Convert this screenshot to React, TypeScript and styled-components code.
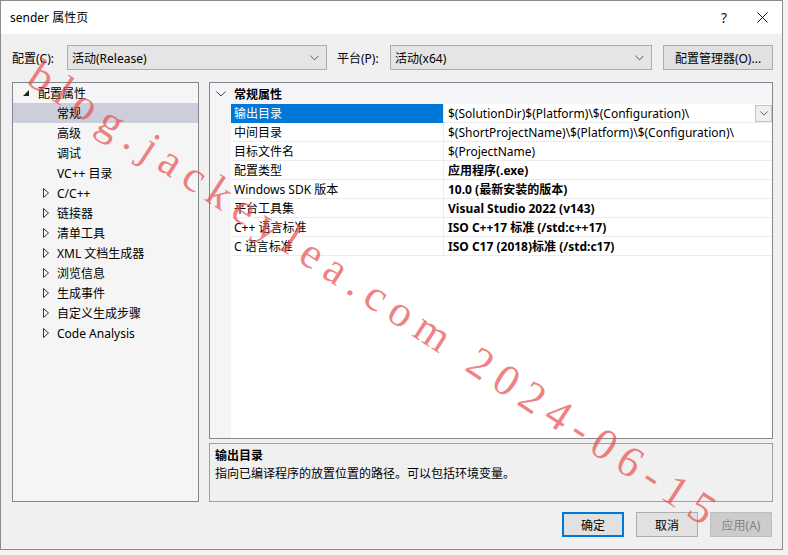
import styled, { createGlobalStyle } from "styled-components"

const GlobalStyle = createGlobalStyle`
    html, body {
        margin: 0;
        padding: 0;
        background: #f3f3f3;
    }
    body {
        font-family: "Noto Sans", "Noto Sans CJK SC", sans-serif;
        font-size: 12px;
        color: #000;
    }
`

type TreeItem = { label: string; level: number; expander?: "open" | "closed"; selected?: boolean }

const treeItems: TreeItem[] = [
    { label: "配置属性", level: 0, expander: "open" },
    { label: "常规", level: 1, selected: true },
    { label: "高级", level: 1 },
    { label: "调试", level: 1 },
    { label: "VC++ 目录", level: 1 },
    { label: "C/C++", level: 1, expander: "closed" },
    { label: "链接器", level: 1, expander: "closed" },
    { label: "清单工具", level: 1, expander: "closed" },
    { label: "XML 文档生成器", level: 1, expander: "closed" },
    { label: "浏览信息", level: 1, expander: "closed" },
    { label: "生成事件", level: 1, expander: "closed" },
    { label: "自定义生成步骤", level: 1, expander: "closed" },
    { label: "Code Analysis", level: 1, expander: "closed" },
]

type Prop = { name: string; value: string; bold?: boolean }

const props: Prop[] = [
    { name: "输出目录", value: "$(SolutionDir)$(Platform)\\$(Configuration)\\" },
    { name: "中间目录", value: "$(ShortProjectName)\\$(Platform)\\$(Configuration)\\" },
    { name: "目标文件名", value: "$(ProjectName)" },
    { name: "配置类型", value: "应用程序(.exe)", bold: true },
    { name: "Windows SDK 版本", value: "10.0 (最新安装的版本)", bold: true },
    { name: "平台工具集", value: "Visual Studio 2022 (v143)", bold: true },
    { name: "C++ 语言标准", value: "ISO C++17 标准 (/std:c++17)", bold: true },
    { name: "C 语言标准", value: "ISO C17 (2018)标准 (/std:c17)", bold: true },
]

const Chevron = ({ size = 9 }: { size?: number }) => (
    <svg width={size} height={Math.round(size / 2) + 1} viewBox="0 0 10 6">
        <polyline points="0.5,0.5 5,5 9.5,0.5" fill="none" stroke="#444" strokeWidth="1" />
    </svg>
)

const Expander = ({ kind }: { kind: "open" | "closed" }) =>
    kind === "open" ? (
        <svg width="8" height="8" viewBox="0 0 8 8">
            <polygon points="7,1 7,7 1,7" fill="#222" />
        </svg>
    ) : (
        <svg width="6" height="10" viewBox="0 0 6 10">
            <polygon points="0.5,0.5 5.5,5 0.5,9.5" fill="none" stroke="#333" strokeWidth="1" />
        </svg>
    )

export default function App() {
    return (
        <>
            <GlobalStyle />
            <Window>
                <TitleBar>
                    <Title>sender 属性页</Title>
                    <TitleButtons>
                        <Help>?</Help>
                        <svg width="11" height="11" viewBox="0 0 11 11">
                            <path d="M0.5,0.5 L10.5,10.5 M10.5,0.5 L0.5,10.5" stroke="#111" strokeWidth="1" />
                        </svg>
                    </TitleButtons>
                </TitleBar>
                <Body>
                    <ConfigRow>
                        <FieldLabel>配置(C):</FieldLabel>
                        <Select width={260}>
                            <span>活动(Release)</span>
                            <Chevron />
                        </Select>
                        <FieldLabel>平台(P):</FieldLabel>
                        <Select width={262}>
                            <span>活动(x64)</span>
                            <Chevron />
                        </Select>
                        <Button width={110} grow>配置管理器(O)...</Button>
                    </ConfigRow>
                    <Main>
                        <Tree>
                            {treeItems.map((item) => (
                                <TreeRow key={item.label} selected={item.selected}>
                                    <ExpanderSlot level={item.level}>
                                        {item.expander && <Expander kind={item.expander} />}
                                    </ExpanderSlot>
                                    <span>{item.label}</span>
                                </TreeRow>
                            ))}
                        </Tree>
                        <RightColumn>
                            <Grid>
                                <CategoryRow>
                                    <Gutter>
                                        <Chevron size={10} />
                                    </Gutter>
                                    <CategoryName>常规属性</CategoryName>
                                </CategoryRow>
                                {props.map((p, i) => (
                                    <PropRow key={p.name}>
                                        <Gutter />
                                        <PropName selected={i === 0}>{p.name}</PropName>
                                        <PropValue bold={p.bold}>
                                            <span>{p.value}</span>
                                            {i === 0 && (
                                                <DropButton>
                                                    <Chevron size={8} />
                                                </DropButton>
                                            )}
                                        </PropValue>
                                    </PropRow>
                                ))}
                                <GridFill>
                                    <Gutter />
                                </GridFill>
                            </Grid>
                            <Description>
                                <DescTitle>输出目录</DescTitle>
                                <div>指向已编译程序的放置位置的路径。可以包括环境变量。</div>
                            </Description>
                        </RightColumn>
                    </Main>
                    <Footer>
                        <Button width={62} primary>确定</Button>
                        <Button width={62}>取消</Button>
                        <Button width={62} disabled>应用(A)</Button>
                    </Footer>
                </Body>
                <Watermark>blog.jackeylea.com 2024-06-15</Watermark>
            </Window>
        </>
    )
}

const Window = styled.div`
    position: relative;
    width: 781px;
    height: 548px;
    border: 1px solid #8c8c8c;
    background: #f0f0f0;
    display: flex;
    flex-direction: column;
`

const TitleBar = styled.div`
    height: 33px;
    background: #fff;
    display: flex;
    align-items: center;
    justify-content: space-between;
    padding: 0 14px 0 9px;
    flex-shrink: 0;
`

const Title = styled.div`
    font-size: 12px;
    color: #000;
    margin-top: -1px;
`

const TitleButtons = styled.div`
    display: flex;
    align-items: center;
    gap: 30px;
`

const Help = styled.span`
    font-size: 14px;
    color: #111;
`

const Body = styled.div`
    flex: 1;
    display: flex;
    flex-direction: column;
    padding: 11px 9px 0 11px;
`

const ConfigRow = styled.div`
    display: flex;
    align-items: center;
    height: 25px;
`

const FieldLabel = styled.span`
    width: 55px;
    flex-shrink: 0;
    &:nth-of-type(2) {
        width: 53px;
        margin-left: 10px;
    }
`

const Select = styled.div<{ width: number }>`
    width: ${(p) => p.width}px;
    height: 25px;
    box-sizing: border-box;
    border: 1px solid #adadad;
    background: #e5e5e5;
    display: flex;
    align-items: center;
    justify-content: space-between;
    padding: 0 7px 0 4px;
`

const Button = styled.div<{ width: number; primary?: boolean; disabled?: boolean; grow?: boolean }>`
    width: ${(p) => p.width}px;
    height: 25px;
    box-sizing: border-box;
    margin-left: ${(p) => (p.grow ? "auto" : "0")};
    display: flex;
    align-items: center;
    justify-content: center;
    border: ${(p) => (p.primary ? "2px solid #0078d7" : p.disabled ? "1px solid #bfbfbf" : "1px solid #adadad")};
    background: ${(p) => (p.disabled ? "#cccccc" : "#e1e1e1")};
    color: ${(p) => (p.disabled ? "#838383" : "#000")};
`

const Main = styled.div`
    display: flex;
    gap: 10px;
    margin-top: 12px;
    height: 420px;
`

const Tree = styled.div`
    width: 187px;
    box-sizing: border-box;
    border: 1px solid #828790;
    background: #f5f5f5;
`

const TreeRow = styled.div<{ selected?: boolean }>`
    height: 20px;
    display: flex;
    align-items: center;
    background: ${(p) => (p.selected ? "#cccedb" : "transparent")};
`

const ExpanderSlot = styled.span<{ level: number }>`
    width: ${(p) => (p.level === 0 ? 25 : 44)}px;
    padding-left: ${(p) => (p.level === 0 ? 9 : 30)}px;
    box-sizing: border-box;
    display: flex;
    align-items: center;
`

const RightColumn = styled.div`
    flex: 1;
    display: flex;
    flex-direction: column;
    gap: 4px;
`

const Grid = styled.div`
    flex: 1;
    box-sizing: border-box;
    border: 1px solid #828790;
    background: #fff;
    display: flex;
    flex-direction: column;
`

const Gutter = styled.div`
    width: 21px;
    flex-shrink: 0;
    align-self: stretch;
    background: #f5f5f7;
    display: flex;
    align-items: center;
    justify-content: center;
`

const CategoryRow = styled.div`
    height: 21px;
    display: flex;
    align-items: center;
    background: #f5f5f7;
`

const CategoryName = styled.span`
    font-weight: bold;
    padding-left: 3px;
`

const PropRow = styled.div`
    height: 19px;
    display: flex;
    align-items: stretch;
`

const PropName = styled.div<{ selected?: boolean }>`
    width: 213px;
    flex-shrink: 0;
    box-sizing: border-box;
    padding-left: 3px;
    display: flex;
    align-items: center;
    border-bottom: 1px solid ${(p) => (p.selected ? "#0078d7" : "#ececec")};
    border-right: 1px solid #ececec;
    background: ${(p) => (p.selected ? "#0078d7" : "#fff")};
    color: ${(p) => (p.selected ? "#fff" : "#000")};
`

const PropValue = styled.div<{ bold?: boolean }>`
    flex: 1;
    display: flex;
    align-items: center;
    justify-content: space-between;
    padding-left: 4px;
    border-bottom: 1px solid #ececec;
    font-weight: ${(p) => (p.bold ? "bold" : "normal")};
`

const DropButton = styled.div`
    width: 17px;
    height: 17px;
    box-sizing: border-box;
    border: 1px solid #c4c4c4;
    background: #efefef;
    display: flex;
    align-items: center;
    justify-content: center;
`

const GridFill = styled.div`
    flex: 1;
    display: flex;
`

const Description = styled.div`
    height: 59px;
    box-sizing: border-box;
    border: 1px solid #a0a0a0;
    background: #f0f0f0;
    padding: 3px 5px;
    line-height: 18px;
`

const DescTitle = styled.div`
    font-weight: bold;
`

const Footer = styled.div`
    display: flex;
    justify-content: flex-end;
    gap: 12px;
    margin-top: 10px;
    padding-right: 1px;
`

// diagonal stamp laid over the whole dialog
const Watermark = styled.div`
    position: absolute;
    left: 32px;
    top: 44px;
    transform-origin: 0 50%;
    transform: rotate(33.2deg);
    font-family: "Liberation Serif", "DejaVu Serif", serif;
    font-size: 44px;
    letter-spacing: 9px;
    white-space: nowrap;
    color: rgba(232, 76, 76, 0.7);
    pointer-events: none;
`
